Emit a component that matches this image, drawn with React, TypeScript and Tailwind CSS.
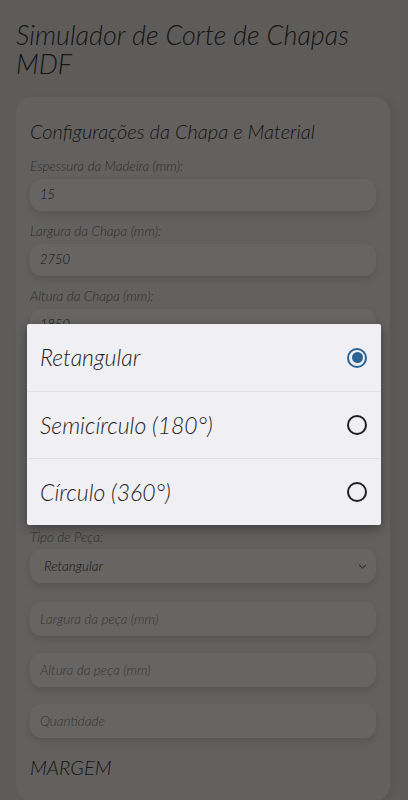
import React from 'react';

const font = { fontFamily: 'Lato, "Open Sans", sans-serif' };

const Field = ({ label, value }: { label: string; value: string }) => (
  <div className="flex flex-col">
    <label className="text-[13.5px] text-[#76726d] italic font-light leading-[14px] mb-[6px]">{label}</label>
    <div className="h-[32px] rounded-[12px] bg-[#fefcf8] shadow-[0_4px_8px_rgba(0,0,0,0.12)] flex items-center px-[10px] text-[13px] italic font-light text-[#3a3632]">
      {value}
    </div>
  </div>
);

const Placeholder = ({ text }: { text: string }) => (
  <div className="h-[34px] rounded-[12px] bg-[#fefcf8] shadow-[0_4px_8px_rgba(0,0,0,0.12)] flex items-center px-[10px] text-[13.5px] italic font-light text-[#8a8681]">
    {text}
  </div>
);

const Radio = ({ checked }: { checked?: boolean }) =>
  checked ? (
    <span className="w-[20px] h-[20px] rounded-full border-2 border-[#2b6394] flex items-center justify-center">
      <span className="w-[11px] h-[11px] rounded-full bg-[#2b6394]" />
    </span>
  ) : (
    <span className="w-[20px] h-[20px] rounded-full border-2 border-[#1f1f1f]" />
  );

export default function App() {
  const options = [
    { label: 'Retangular', checked: true },
    { label: 'Semicírculo (180°)' },
    { label: 'Círculo (360°)' },
  ];

  return (
    <div className="relative w-[408px] h-[800px] overflow-hidden bg-[#e8e6e1]" style={font}>
      <div className="px-[16px] pt-[20px]">
        <h1 className="text-[27px] leading-[29px] italic font-light text-[#3a3734]">
          Simulador de Corte de Chapas MDF
        </h1>

        <div className="mt-[19px] mr-[2px] rounded-[16px] bg-[#f5f2ed] shadow-[6px_0_10px_rgba(0,0,0,0.06)] px-[14px] pt-[22px] pb-[22px]">
          <h2 className="text-[20px] leading-[24px] italic font-light text-[#3a3734] mb-[16px]">
            Configurações da Chapa e Material
          </h2>

          <div className="flex flex-col gap-[13px]">
            <Field label="Espessura da Madeira (mm):" value="15" />
            <Field label="Largura da Chapa (mm):" value="2750" />
            <Field label="Altura da Chapa (mm):" value="1850" />
            <div className="h-[163px] flex flex-col justify-between py-[20px]">
              <div className="h-[32px] rounded-[12px] bg-[#fefcf8] shadow-[0_4px_8px_rgba(0,0,0,0.12)]" />
              <div className="h-[32px] rounded-[12px] bg-[#fefcf8] shadow-[0_4px_8px_rgba(0,0,0,0.12)]" />
            </div>
            <div className="flex flex-col">
              <label className="text-[13.5px] text-[#76726d] italic font-light leading-[14px] mb-[5px]">Tipo de Peça:</label>
              <div className="h-[34px] rounded-[12px] bg-[#fefcf8] shadow-[0_4px_8px_rgba(0,0,0,0.12)] flex items-center justify-between pl-[14px] pr-[9px] text-[13.5px] italic font-light text-[#3a3632]">
                <span>Retangular</span>
                <svg width="9" height="5" viewBox="0 0 10 6" fill="none" stroke="#3a3632" strokeWidth="1.2">
                  <path d="M1 1l4 4 4-4" />
                </svg>
              </div>
            </div>
          </div>

          <div className="mt-[19px] flex flex-col gap-[17px]">
            <Placeholder text="Largura da peça (mm)" />
            <Placeholder text="Altura da peça (mm)" />
            <Placeholder text="Quantidade" />
          </div>

          <h3 className="mt-[17px] text-[20px] leading-[24px] italic font-light text-[#3a3734]">MARGEM</h3>
        </div>
      </div>

      <div className="absolute inset-0 bg-black/60" />

      <div className="absolute left-[27px] top-[324px] w-[354px] bg-[#f0eff4] rounded-[2px] shadow-[0_4px_12px_rgba(0,0,0,0.35)]">
        {options.map((o, i) => (
          <div
            key={o.label}
            className={`h-[67px] flex items-center justify-between pl-[13px] pr-[14px] ${i > 0 ? 'border-t border-[#e1e0e5]' : ''}`}
          >
            <span className="text-[23px] italic font-light text-[#1e1e1e]">{o.label}</span>
            <Radio checked={o.checked} />
          </div>
        ))}
      </div>
    </div>
  );
}
